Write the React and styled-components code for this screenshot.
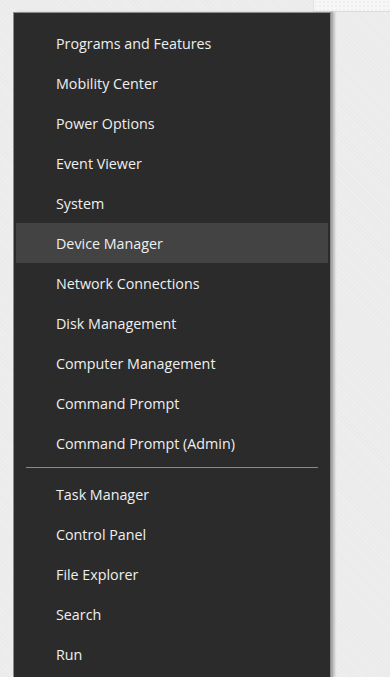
import React from 'react';
import styled, { createGlobalStyle } from 'styled-components';

const GlobalStyle = createGlobalStyle`
  html, body {
    margin: 0;
    padding: 0;
    height: 100%;
    overflow: hidden;
  }
  body {
    background-color: #ebebeb;
    background-image: repeating-linear-gradient(
      45deg,
      rgba(255, 255, 255, 0.18) 0px,
      rgba(255, 255, 255, 0.18) 1px,
      transparent 1px,
      transparent 3px
    );
    font-family: 'Open Sans', 'Noto Sans', sans-serif;
  }
`;

const menuGroups = [
  [
    'Programs and Features',
    'Mobility Center',
    'Power Options',
    'Event Viewer',
    'System',
    'Device Manager',
    'Network Connections',
    'Disk Management',
    'Computer Management',
    'Command Prompt',
    'Command Prompt (Admin)',
  ],
  ['Task Manager', 'Control Panel', 'File Explorer', 'Search', 'Run'],
];

const App = () => {
  return (
    <>
      <GlobalStyle />
      <Desktop>
        <TopStrip>
          <Window />
        </TopStrip>
        <Menu>
          {menuGroups.map((group, gi) => (
            <React.Fragment key={gi}>
              {gi > 0 && <Separator />}
              {group.map((label) => (
                <MenuItem key={label} $active={label === 'Device Manager'}>
                  {label}
                </MenuItem>
              ))}
            </React.Fragment>
          ))}
        </Menu>
      </Desktop>
    </>
  );
};

export default App;

// Styled Components
const Desktop = styled.div`
  width: 390px;
  height: 677px;
  display: flex;
  flex-direction: column;
  overflow: hidden;
`;

const TopStrip = styled.div`
  height: 12px;
  display: flex;
  justify-content: flex-end;
`;

const Window = styled.div`
  width: 76px;
  height: 11px;
  background-color: #f7f7f7;
  background-image: radial-gradient(#e4e4e4 0.6px, transparent 0.8px);
  background-size: 4px 4px;
  border-bottom: 1px solid #dcdcdc;
  border-left: 1px solid #e2e2e2;
`;

const Menu = styled.div`
  margin-left: 13px;
  width: 312px;
  flex: 1;
  background-color: #2b2b2b;
  border: 1px solid #8c8c8c;
  border-bottom: none;
  padding: 10px 2px 0 2px;
  box-shadow: 2px 0 0 #a9a9a9, 4px 0 2px rgba(0, 0, 0, 0.18);
`;

const MenuItem = styled.div`
  height: 40px;
  display: flex;
  align-items: center;
  padding-left: 40px;
  font-size: 14.3px;
  color: #efefef;
  background-color: ${(p) => (p.$active ? '#434343' : 'transparent')};
  cursor: default;
`;

const Separator = styled.div`
  height: 1px;
  margin: 4px 10px 6px 10px;
  background-color: #8a8a8a;
`;
